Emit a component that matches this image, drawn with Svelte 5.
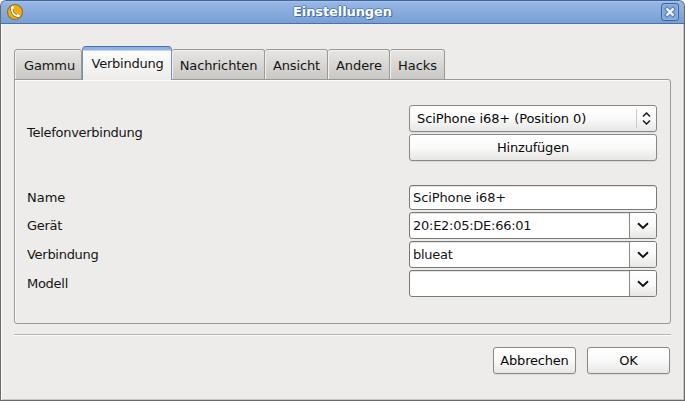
<script>
  const tabs = [
    { label: 'Gammu', width: 68, spacing: -0.1 },
    { label: 'Verbindung', width: 90, spacing: -0.25, active: true },
    { label: 'Nachrichten', width: 93, spacing: -0.1 },
    { label: 'Ansicht', width: 63, spacing: -0.15 },
    { label: 'Andere', width: 62, spacing: -0.1 },
    { label: 'Hacks', width: 55, spacing: 0 }
  ];
  const combos = [
    { label: 'Gerät', value: '20:E2:05:DE:66:01' },
    { label: 'Verbindung', value: 'blueat' },
    { label: 'Modell', value: '' }
  ];
</script>

<div class="window">
  <header>
    <svg class="logo" width="18" height="18" viewBox="0 0 18 18">
      <circle cx="9" cy="9" r="7.5" fill="#f5ad0c" stroke="#86713f" stroke-width="1.1" />
      <path d="M6.2 3.8C4.8 8 7.4 13 12.6 13.4" fill="none" stroke="#86661c" stroke-width="3.2" />
      <path d="M6 4C4.8 8 7.4 12.8 12.6 13.3" fill="none" stroke="#fff" stroke-width="1.8" />
      <path d="M5.8 3.4L7.6 5.6M10.8 11.6L13.6 13.4" stroke="#fff" stroke-width="2" />
    </svg>
    <h1>Einstellungen</h1>
    <button class="close" aria-label="Schließen">
      <svg width="12" height="12" viewBox="0 0 12 12">
        <path d="M3.2 3.2L8.8 8.8M8.8 3.2L3.2 8.8" stroke="#4f77b0" stroke-width="4.2" stroke-linecap="square" />
        <path d="M2.4 2.4L9.6 9.6M9.6 2.4L2.4 9.6" stroke="#eaf1fc" stroke-width="2.5" />
      </svg>
    </button>
  </header>
  <main>
    <nav>
      {#each tabs as tab}
        <button
          class="tab"
          class:active={tab.active}
          style:width="{tab.width}px"
          style:letter-spacing="{tab.spacing}px">{tab.label}</button>
      {/each}
    </nav>
    <section class="panel">
      <div class="row">
        <span class="label">Telefonverbindung</span>
        <div class="stack">
          <button class="btn choice">
            <span>SciPhone i68+ (Position 0)</span>
            <span class="spin">
              <svg width="9" height="13" viewBox="0 0 9 13"><path d="M1 4.5L4.5 1L8 4.5M1 8.5L4.5 12L8 8.5" fill="none" stroke="#1c1c1c" stroke-width="1.5" /></svg>
            </span>
          </button>
          <button class="btn">Hinzufügen</button>
        </div>
      </div>
      <div class="fields">
        <div class="row">
          <span class="label short">Name</span>
          <div class="entry name">SciPhone i68+</div>
        </div>
        {#each combos as combo}
          <div class="row">
            <span class="label">{combo.label}</span>
            <div class="entry">
              <span class="value">{combo.value}</span>
              <span class="drop">
                <svg width="12" height="8" viewBox="0 0 12 8"><path d="M1 1.3L6 6L11 1.3" fill="none" stroke="#111" stroke-width="1.9" /></svg>
              </span>
            </div>
          </div>
        {/each}
      </div>
    </section>
    <footer>
      <button class="btn">Abbrechen</button>
      <button class="btn">OK</button>
    </footer>
  </main>
</div>

<style>
  :global(body) { background: #fff; }
  * { box-sizing: border-box; }
  button { font: inherit; color: inherit; margin: 0; padding: 0; }
  svg { display: block; }
  .window {
    width: 685px; height: 401px; display: flex; flex-direction: column;
    background: #edecea; border: 1px solid #6b6966; border-top: 0; border-radius: 6px 6px 0 0;
    font: 13px/16px "DejaVu Sans", sans-serif; color: #141414; overflow: hidden;
    box-shadow: inset 1px 0 #fbfbfb, inset -1px -1px #c9c7c4;
  }
  header {
    height: 24px; flex: none; display: flex; align-items: center; padding: 0 5px;
    margin: 0 -1px; border: 1px solid #41649a; border-bottom-color: #4a71ab;
    border-radius: 6px 6px 0 0;
    background: linear-gradient(#a8c5ee 0, #95b5e3 2px, #799fd3 100%);
  }
  h1 {
    flex: 1; margin: 0; text-align: center; font-size: 13px; line-height: 16px; letter-spacing: -0.1px;
    color: #fff; text-shadow: 1px 1px #4670ab, -1px 0 #5b84bd, 0 -1px #5b84bd, 1px 0 #4670ab;
  }
  .close {
    width: 18px; height: 18px; display: grid; place-items: center;
    border: 1px solid #3e649c; border-radius: 3px; background: #83a8da; box-shadow: inset 0 0 0 1px #8fb2e2;
  }
  main { flex: 1; padding: 22px 13px 0; }
  nav { display: flex; align-items: flex-end; height: 34px; margin-bottom: -1px; position: relative; }
  .tab {
    height: 31px; border: 1px solid #9b9996; border-left-width: 0; border-radius: 3px 3px 0 0;
    background: linear-gradient(#e7e6e4, #c9c8c5); box-shadow: inset 1px 1px #f2f1f0; padding: 2px 0 0 1px;
  }
  .tab:first-child { border-left-width: 1px; padding-left: 3px; }
  .tab.active {
    height: 34px; border: 1px solid #6f8fbc; border-top-color: #4a71ab; border-bottom: 0;
    border-radius: 4px 4px 0 0; background: linear-gradient(#8fb2e2 0 3px, #fcfcfc 4px, #edecea);
    box-shadow: none; padding-top: 1px;
  }
  .panel {
    height: 245px; padding: 25px 13px 0 12px; border: 1px solid #9b9996; border-radius: 0 3px 3px 3px;
    box-shadow: inset 1px 1px #fbfbfb;
  }
  .row { display: flex; align-items: center; justify-content: space-between; }
  .label { letter-spacing: -0.28px; }
  .label.short { letter-spacing: 0; }
  .stack { width: 248px; display: flex; flex-direction: column; gap: 2px; }
  .btn {
    height: 27px; border: 1px solid #8a8886; border-radius: 3px; color: #080808; letter-spacing: -0.2px;
    background: linear-gradient(#fff, #fafafa 50%, #e7e6e4); box-shadow: 0 1px 1px #dcdad7;
  }
  .choice { display: flex; align-items: center; justify-content: space-between; padding: 0 5px 0 7px; letter-spacing: -0.1px; }
  .spin { height: 19px; padding-left: 5px; border-left: 1px solid #cbc9c6; display: flex; align-items: center; }
  .fields { margin-top: 24px; display: flex; flex-direction: column; gap: 2px; }
  .entry {
    width: 248px; height: 27px; display: flex; align-items: stretch; padding-left: 3px; line-height: 25px;
    border: 1px solid #7b7976; border-radius: 3px; background: #fff; overflow: hidden; box-shadow: inset 0 1px #e4e4e3;
  }
  .name { height: 25px; line-height: 24px; letter-spacing: -0.1px; }
  .value { flex: 1; letter-spacing: -0.26px; }
  .drop {
    width: 27px; display: grid; place-items: center; border-left: 1px solid #8a8886;
    background: linear-gradient(#fff, #fafafa 50%, #e7e6e4);
  }
  footer {
    margin-top: 10px; padding: 12px 1px 0 0; border-top: 1px solid #b6b4b1; box-shadow: inset 0 1px #fbfbfb;
    display: flex; justify-content: flex-end; gap: 11px;
  }
  footer .btn { width: 83px; }
</style>
